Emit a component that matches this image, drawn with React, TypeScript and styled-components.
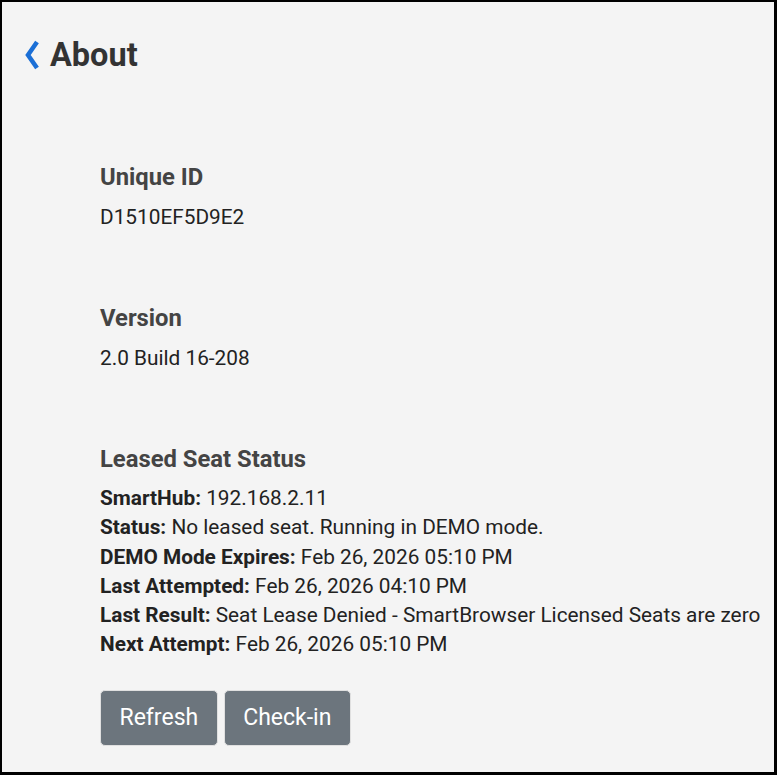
import React from "react";
import styled, { createGlobalStyle } from "styled-components";

const Global = createGlobalStyle`
  html, body { margin: 0; padding: 0; }
  body { font-family: Roboto, "Liberation Sans", sans-serif; background: #f4f4f4; }
`;

const Frame = styled.div`
  box-sizing: border-box;
  width: 777px;
  height: 775px;
  border-style: solid;
  border-color: #000;
  border-width: 2px 3px 3px 2px;
  background: #f4f4f4;
  overflow: hidden;
`;

const Header = styled.div`
  display: flex;
  align-items: center;
  gap: 10px;
  padding: 36px 0 0 22px;
  height: 34px;
`;

const Back = styled.button`
  display: flex;
  align-items: center;
  border: 0;
  padding: 0;
  background: none;
  cursor: pointer;
`;

const Title = styled.h1`
  margin: 0;
  font-size: 32.5px;
  font-weight: 700;
  color: #333;
  line-height: 34px;
`;

const Content = styled.div`
  padding: 91px 0 0 98px;
  display: flex;
  flex-direction: column;
`;

const Section = styled.section`
  margin-bottom: 73px;
`;

const Heading = styled.h2<{ $tight?: boolean }>`
  margin: 0 0 ${(p) => (p.$tight ? 11 : 12)}px;
  font-size: 23.8px;
  font-weight: 700;
  color: #444;
  line-height: 28px;
`;

const Value = styled.div`
  font-size: 20.8px;
  color: #222;
  line-height: 28px;
`;

const Line = styled.div`
  font-size: 20.8px;
  color: #222;
  line-height: 29.3px;
  white-space: nowrap;
  b { font-weight: 700; }
`;

const Buttons = styled.div`
  display: flex;
  gap: 6px;
  margin-top: 30px;
`;

const Button = styled.button`
  height: 56px;
  padding: 0 18.5px;
  border: 1px solid #e0e0e0;
  border-radius: 5px;
  background: #6c757d;
  color: #fff;
  font-family: Roboto, "Liberation Sans", sans-serif;
  font-size: 23px;
  cursor: pointer;
`;

const rows: [string, string][] = [
  ["SmartHub:", "192.168.2.11"],
  ["Status:", "No leased seat. Running in DEMO mode."],
  ["DEMO Mode Expires:", "Feb 26, 2026 05:10 PM"],
  ["Last Attempted:", "Feb 26, 2026 04:10 PM"],
  ["Last Result:", "Seat Lease Denied - SmartBrowser Licensed Seats are zero"],
  ["Next Attempt:", "Feb 26, 2026 05:10 PM"],
];

export default function App() {
  return (
    <>
      <Global />
      <Frame>
        <Header>
          <Back aria-label="Back">
            <svg width="16" height="30" viewBox="0 0 16 30">
              <polyline points="13,2 4,15 13,28" fill="none" stroke="#1b6fd6" strokeWidth="4.5" strokeLinejoin="miter" />
            </svg>
          </Back>
          <Title>About</Title>
        </Header>
        <Content>
          <Section>
            <Heading>Unique ID</Heading>
            <Value>D1510EF5D9E2</Value>
          </Section>
          <Section>
            <Heading>Version</Heading>
            <Value>2.0 Build 16-208</Value>
          </Section>
          <div>
            <Heading $tight>Leased Seat Status</Heading>
            {rows.map(([k, v]) => (
              <Line key={k}>
                <b>{k}</b> {v}
              </Line>
            ))}
          </div>
          <Buttons>
            <Button>Refresh</Button>
            <Button>Check-in</Button>
          </Buttons>
        </Content>
      </Frame>
    </>
  );
}
